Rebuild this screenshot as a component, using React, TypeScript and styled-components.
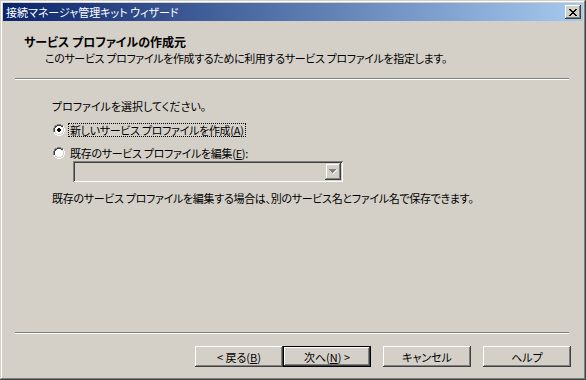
import React from 'react';
import styled, { createGlobalStyle } from 'styled-components';

const face = '#d4d0c8';

const GlobalStyle = createGlobalStyle`
  html, body {
    margin: 0;
    padding: 0;
    background: ${face};
  }
  body {
    font-family: "Noto Sans CJK JP", "Noto Sans", sans-serif;
    font-size: 11px;
    font-feature-settings: "palt";
    color: #000;
  }
`;

const Window = styled.div`
  width: 586px;
  height: 380px;
  box-sizing: border-box;
  padding: 3px;
  background: ${face};
  display: flex;
  flex-direction: column;
  box-shadow: inset -1px -1px #404040, inset 1px 1px ${face},
    inset -2px -2px #808080, inset 2px 2px #ffffff;
`;

const TitleBar = styled.div`
  height: 18px;
  flex: none;
  display: flex;
  align-items: center;
  justify-content: space-between;
  padding: 0 2px 0 3px;
  background: linear-gradient(to right, #0a246a, #a6caf0);
  color: #fff;
  font-size: 11px;
  line-height: 18px;
`;

const TitleText = styled.span`
  white-space: nowrap;
`;

const CloseBox = styled.div`
  width: 16px;
  height: 14px;
  box-sizing: border-box;
  background: ${face};
  display: flex;
  align-items: center;
  justify-content: center;
  box-shadow: inset -1px -1px #404040, inset 1px 1px #ffffff,
    inset -2px -2px #808080, inset 2px 2px ${face};
`;

const Header = styled.div`
  height: 57px;
  flex: none;
  box-sizing: border-box;
  padding: 12px 0 0 21px;
`;

const HeaderTitle = styled.div`
  font-weight: bold;
  font-size: 12px;
  line-height: 17px;
`;

const HeaderSub = styled.div`
  padding-left: 21px;
  line-height: 16px;
  letter-spacing: -0.35px;
  white-space: nowrap;
`;

const Rule = styled.div`
  flex: none;
  height: 0;
  margin: 0 14px 0 12px;
  border-top: 1px solid #808080;
  border-bottom: 1px solid #ffffff;
`;

const Body = styled.div`
  flex: 1;
  box-sizing: border-box;
  padding: 19px 0 0 49px;
  display: flex;
  flex-direction: column;
`;

const Line = styled.div`
  line-height: 14px;
  white-space: nowrap;
`;

const RadioRow = styled.label<{ $top: number }>`
  display: flex;
  align-items: center;
  gap: 4px;
  margin-top: ${({ $top }) => $top}px;
  padding-left: 1px;
  height: 14px;
  white-space: nowrap;
`;

const RadioLabel = styled.span<{ $focus?: boolean }>`
  line-height: 12px;
  padding: 0 1px;
  letter-spacing: -0.3px;
  outline: ${({ $focus }) => ($focus ? '1px dotted #000' : 'none')};
`;

const Key = styled.span`
  text-decoration: underline;
`;

const Combo = styled.div`
  margin: 1px 0 0 21px;
  width: 270px;
  height: 21px;
  box-sizing: border-box;
  padding: 2px;
  display: flex;
  justify-content: flex-end;
  background: ${face};
  box-shadow: inset 1px 1px #808080, inset -1px -1px #ffffff,
    inset 2px 2px #404040, inset -2px -2px ${face};
`;

const ComboButton = styled.div`
  width: 16px;
  height: 17px;
  box-sizing: border-box;
  display: flex;
  align-items: center;
  justify-content: center;
  background: ${face};
  box-shadow: inset -1px -1px #404040, inset 1px 1px ${face},
    inset -2px -2px #808080, inset 2px 2px #ffffff;
`;

const Note = styled(Line)`
  margin-top: 9px;
  letter-spacing: -0.3px;
`;

const Footer = styled.div`
  height: 43px;
  flex: none;
  box-sizing: border-box;
  padding: 12px 12px 0 0;
  display: flex;
  justify-content: flex-end;
  gap: 12px;
`;

const Pair = styled.div`
  display: flex;
`;

const Button = styled.div<{ $default?: boolean }>`
  width: 88px;
  height: 21px;
  box-sizing: border-box;
  display: flex;
  align-items: center;
  justify-content: center;
  background: ${face};
  white-space: nowrap;
  border: ${({ $default }) => ($default ? '1px solid #000' : 'none')};
  box-shadow: inset -1px -1px #404040, inset 1px 1px #ffffff,
    inset -2px -2px #808080, inset 2px 2px ${face};
`;

const RadioIcon = ({ checked }: { checked?: boolean }) => (
  <svg width="12" height="12" viewBox="0 0 12 12" shapeRendering="crispEdges">
    <path d="M4 0h4v1H4zM2 1h2v1H2zM8 1h2v1H8zM1 2h1v2H1zM0 4h1v4H0z" fill="#808080" />
    <path d="M4 1h4v1H4zM2 2h2v1H2zM8 2h2v1H8zM1 4h1v4H1zM2 3h1v1H2zM9 3h1v1H9z" fill="#404040" />
    <path d="M1 8h1v2H1zM2 10h2v1H2zM4 11h4v1H4zM8 10h2v1H8zM10 8h1v2h-1zM11 4h1v4h-1zM10 2h1v2h-1z" fill="#ffffff" />
    <path d="M2 8h1v1H2zM3 9h1v1H3zM4 10h4v1H4zM8 9h1v1H8zM9 8h1v1H9zM10 4h1v4h-1zM9 3h1v1H9z" fill={face} />
    <path d="M4 2h4v1h1v1h1v4H9v1H8v1H4V9H3V8H2V4h1V3h1z" fill="#ffffff" />
    {checked && <path d="M5 4h2v1h1v2H7v1H5V7H4V5h1z" fill="#000" />}
  </svg>
);

const App: React.FC = () => {
  return (
    <>
      <GlobalStyle />
      <Window>
        <TitleBar>
          <TitleText>接続マネージャ管理キット ウィザード</TitleText>
          <CloseBox>
            <svg width="8" height="7" viewBox="0 0 8 7" shapeRendering="crispEdges">
              <path
                d="M0 0h2v1h1v1h2V1h1V0h2v1H7v1H6v1H5v1h1v1h1v1h1v1H6V6H5V5H3v1H2v1H0V6h1V5h1V4h1V3H2V2H1V1H0z"
                fill="#000"
              />
            </svg>
          </CloseBox>
        </TitleBar>
        <Header>
          <HeaderTitle>サービス プロファイルの作成元</HeaderTitle>
          <HeaderSub>このサービス プロファイルを作成するために利用するサービス プロファイルを指定します。</HeaderSub>
        </Header>
        <Rule />
        <Body>
          <Line>プロファイルを選択してください。</Line>
          <RadioRow $top={10}>
            <RadioIcon checked />
            <RadioLabel $focus>
              新しいサービス プロファイルを作成(<Key>A</Key>)
            </RadioLabel>
          </RadioRow>
          <RadioRow $top={9}>
            <RadioIcon />
            <RadioLabel>
              既存のサービス プロファイルを編集(<Key>E</Key>):
            </RadioLabel>
          </RadioRow>
          <Combo>
            <ComboButton>
              <svg width="8" height="5" viewBox="0 0 8 5" shapeRendering="crispEdges">
                <path d="M1 1h7v1H7v1H6v1H5v1H4V4h1V3h1V2h1V1z" fill="#ffffff" />
                <path d="M0 0h7v1H6v1H5v1H4v1H3V3H2V2H1V1H0z" fill="#808080" />
              </svg>
            </ComboButton>
          </Combo>
          <Note>既存のサービス プロファイルを編集する場合は、別のサービス名とファイル名で保存できます。</Note>
        </Body>
        <Rule />
        <Footer>
          <Pair>
            <Button>
              &lt; 戻る(<Key>B</Key>)
            </Button>
            <Button $default>
              次へ(<Key>N</Key>) &gt;
            </Button>
          </Pair>
          <Button>キャンセル</Button>
          <Button>ヘルプ</Button>
        </Footer>
      </Window>
    </>
  );
};

export default App;
